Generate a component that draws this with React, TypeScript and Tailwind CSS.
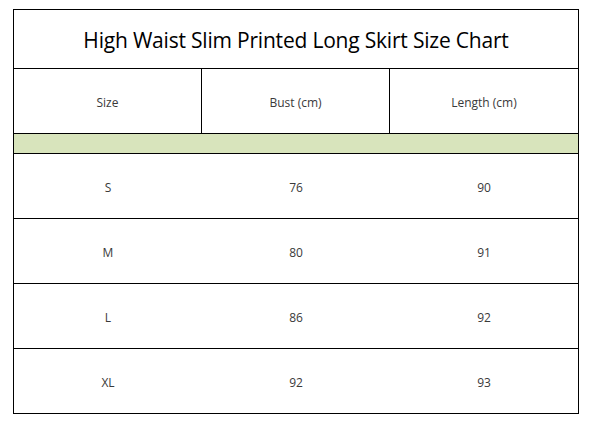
const rows = [
  { size: 'S', bust: '76', length: '90' },
  { size: 'M', bust: '80', length: '91' },
  { size: 'L', bust: '86', length: '92' },
  { size: 'XL', bust: '92', length: '93' },
];

const Cell = ({ children, divider }: { children: React.ReactNode; divider?: boolean }) => (
  <div
    className={`w-[188px] flex items-center justify-center pt-[3px] ${divider ? 'border-r border-black' : ''}`}
  >
    {children}
  </div>
);

export default function App() {
  return (
    <div className="w-[595px] h-[424px] bg-white pt-[9px] pl-[13px] font-['Open_Sans',sans-serif]">
      <div className="w-[566px] border border-black flex flex-col">
        <div className="h-[58px] flex items-center justify-center pt-[4px] text-[21px] text-black tracking-[-0.2px]">
          High Waist Slim Printed Long Skirt Size Chart
        </div>
        <div className="h-[65px] border-t border-black flex text-[12px] text-[#3a3a3a]">
          <Cell divider>Size</Cell>
          <Cell divider>Bust (cm)</Cell>
          <Cell>Length (cm)</Cell>
        </div>
        <div className="h-[20px] border-t border-black bg-[#d8e4bc]" />
        {rows.map((r) => (
          <div key={r.size} className="h-[65px] border-t border-black flex text-[12px] text-[#3a3a3a]">
            <Cell>{r.size}</Cell>
            <Cell>{r.bust}</Cell>
            <Cell>{r.length}</Cell>
          </div>
        ))}
      </div>
    </div>
  );
}
